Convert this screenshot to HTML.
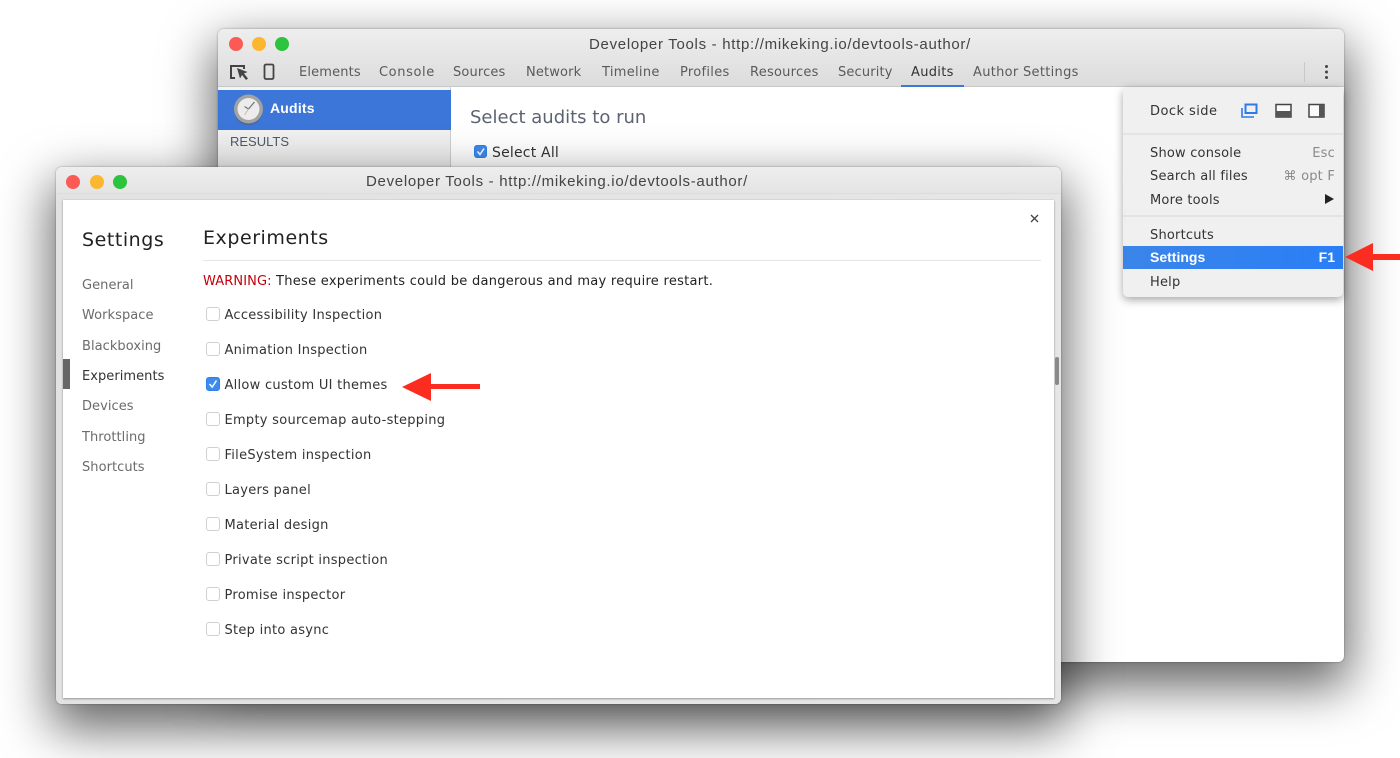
<!DOCTYPE html>
<html><head><meta charset="utf-8">
<style>
html,body{margin:0;padding:0;background:#fff;width:1400px;height:758px;overflow:hidden}
body{position:relative;font-family:"DejaVu Sans","Liberation Sans",sans-serif;font-size:13px;color:#333}
div{position:absolute;box-sizing:border-box}
.t{position:absolute;white-space:nowrap;line-height:16px;filter:blur(.3px)}
#w1{left:218px;top:29px;width:1126px;height:633px;background:#fff;border-radius:6px;box-shadow:0 20px 50px 5px rgba(0,0,0,.6),0 0 2px rgba(0,0,0,.35)}
#w1b{left:218px;top:29px;width:1126px;height:58px;background:linear-gradient(#eeeeee,#dcdcdc);border-radius:6px 6px 0 0;border-bottom:1px solid #c8c8c8}
#w2{left:56px;top:167px;width:1005px;height:537px;background:linear-gradient(90deg,#e2e2e2,#e6e6e6);border-radius:6px;box-shadow:0 20px 50px 5px rgba(0,0,0,.6),0 0 2px rgba(0,0,0,.35)}
#dlg{left:63px;top:200px;width:991px;height:498px;background:#fff;box-shadow:0 1px 2px rgba(0,0,0,.3),0 0 1px rgba(0,0,0,.2)}
.dot{width:14px;height:14px;border-radius:50%}
.tab{color:#5a5a5a;font-size:13px;top:65px;letter-spacing:.15px}
.s{color:#6b6b6b;left:82px;font-size:13px;letter-spacing:.05px}
.x{left:224.500px;color:#333;font-size:13px;letter-spacing:.27px}
.cb{left:206px;width:14px;height:14px;border:1px solid #d0d0d0;border-radius:3px;background:#fff}
.cb.on{background:#3b8bf0;border-color:#2f7fe6}
.m{color:#333;left:1150px;font-size:13px;letter-spacing:.2px}
.k{color:#8a8a8a;font-size:13px;letter-spacing:.2px}
.sep{left:1123px;width:220px;height:2px;background:#e4e4e4}
.ti{color:#444;font-family:'Liberation Sans',sans-serif;font-size:15px;letter-spacing:.7px}
</style></head><body>
<div id="w1"></div>
<div id="w1b"></div>
<div class="dot" style="left:229px;top:37px;background:#fb5a55"></div>
<div class="dot" style="left:252px;top:37px;background:#fdb62f"></div>
<div class="dot" style="left:275px;top:37px;background:#2cc33f"></div>
<span class="t ti" style="left:589px;top:37px">Developer Tools - http://mikeking.io/devtools-author/</span>
<svg style="position:absolute;left:229px;top:63px" width="20" height="18" viewBox="0 0 20 18"><path d="M6 15H2V3h13v3" fill="none" stroke="#444" stroke-width="2"/><path d="M8 5l3 10.500 2-3.500 4 5 2-1.500-4-5 3.500-1.500z" fill="#444"/></svg>
<svg style="position:absolute;left:263px;top:63px" width="12" height="17" viewBox="0 0 12 17"><rect x="1.500" y="1.500" width="9" height="14.500" rx="1.500" fill="none" stroke="#444" stroke-width="1.800"/></svg>
<span class="t tab" style="left:299px">Elements</span>
<span class="t tab" style="left:379px;letter-spacing:.6px">Console</span>
<span class="t tab" style="left:453px">Sources</span>
<span class="t tab" style="left:526px">Network</span>
<span class="t tab" style="left:602px;letter-spacing:.3px">Timeline</span>
<span class="t tab" style="left:680px;letter-spacing:.3px">Profiles</span>
<span class="t tab" style="left:750px;letter-spacing:.25px">Resources</span>
<span class="t tab" style="left:838px">Security</span>
<span class="t tab" style="left:911px;color:#333;letter-spacing:.3px">Audits</span>
<span class="t tab" style="left:973px;letter-spacing:.3px">Author Settings</span>
<div style="left:901px;top:85px;width:63px;height:2px;background:#3b78d8"></div>
<div style="left:1304px;top:62px;width:1px;height:20px;background:#c8c8c8"></div>
<div style="left:1325px;top:65px;width:3px;height:3px;border-radius:50%;background:#444;box-shadow:0 5.500px 0 #444,0 11px 0 #444"></div>
<div style="left:218px;top:87px;width:233px;height:90px;background:linear-gradient(#f4f4f4,#ececec);border-right:1px solid #cfcfcf"></div>
<div style="left:218px;top:90px;width:233px;height:40px;background:#3b76d8"></div>
<svg style="position:absolute;left:233px;top:93px" width="31" height="33" viewBox="0 0 31 33"><ellipse cx="15.500" cy="18" rx="14" ry="14" fill="#555" opacity=".5"/><circle cx="15.500" cy="16" r="14.500" fill="#a2a2a2"/><circle cx="15.500" cy="16" r="11" fill="#ececec"/><path d="M15.500 16l-4-2.500M15.500 16l6-7" stroke="#777" stroke-width="1.300" fill="none"/><path d="M15.500 16l-4 6" stroke="#e9a9a9" stroke-width="1" fill="none"/></svg>
<span class="t" style="left:270px;top:100px;color:#fff;font-weight:bold;font-size:14px;font-family:'Liberation Sans',sans-serif;letter-spacing:.2px">Audits</span>
<span class="t" style="left:230px;top:134px;color:#4d5a6b;font-size:13px;font-family:'Liberation Sans',sans-serif">RESULTS</span>
<span class="t" style="left:470px;top:109px;color:#5c6370;font-size:18px;line-height:18px">Select audits to run</span>
<div class="cb on" style="left:474px;top:145px;width:13px;height:13px"></div>
<svg style="position:absolute;left:474px;top:145px" width="13" height="13"><path d="M3.500 6.500l2.500 3 4-6" stroke="#fff" stroke-width="1.500" fill="none"/></svg>
<span class="t" style="left:492px;top:145px;font-size:14px;color:#333;letter-spacing:.2px">Select All</span>

<!-- dropdown menu -->
<div style="left:1123px;top:87px;width:220px;height:210px;background:#f0f0f0;border-radius:5px;box-shadow:0 3px 9px rgba(0,0,0,.35)"></div>
<span class="t m" style="top:104px;letter-spacing:.45px">Dock side</span>
<svg style="position:absolute;left:1241px;top:103px" width="17" height="15" viewBox="0 0 17 15"><path d="M1 5v9h12" fill="none" stroke="#2e7be8" stroke-width="1.600"/><rect x="4.500" y="1.500" width="11" height="8.500" fill="none" stroke="#2e7be8" stroke-width="2"/></svg>
<svg style="position:absolute;left:1275px;top:103px" width="17" height="15" viewBox="0 0 17 15"><rect x="1" y="1.500" width="15" height="12.500" fill="#fafafa" stroke="#444" stroke-width="1.500"/><rect x="1" y="8" width="15" height="6" fill="#555"/></svg>
<svg style="position:absolute;left:1308px;top:103px" width="17" height="15" viewBox="0 0 17 15"><rect x="1" y="1.500" width="15" height="12.500" fill="#fafafa" stroke="#444" stroke-width="1.500"/><rect x="11" y="1.500" width="5" height="12.500" fill="#555"/></svg>
<div class="sep" style="top:133px"></div>
<span class="t m" style="top:146px">Show console</span><span class="t k" style="right:65px;top:146px">Esc</span>
<span class="t m" style="top:169px">Search all files</span><span class="t k" style="right:65px;top:169px">⌘ opt F</span>
<span class="t m" style="top:193px">More tools</span>
<svg style="position:absolute;left:1325px;top:194px" width="9" height="10"><path d="M0 0l9 5-9 5z" fill="#222"/></svg>
<div class="sep" style="top:215px"></div>
<span class="t m" style="top:228px">Shortcuts</span>
<div style="left:1123px;top:246px;width:220px;height:23px;background:linear-gradient(90deg,#3b85ea,#2a7ef5)"></div>
<span class="t m" style="top:249px;color:#fff;font-weight:bold;font-family:'Liberation Sans',sans-serif;font-size:14px;letter-spacing:0">Settings</span>
<span class="t" style="right:65px;top:249px;color:#fff;font-weight:bold;font-family:'Liberation Sans',sans-serif;font-size:14px">F1</span>
<span class="t m" style="top:275px">Help</span>
<svg style="position:absolute;left:1344px;top:242px" width="56" height="30"><path d="M1 15L29 1v11h27v6H29v11z" fill="#fb2c20"/></svg>

<!-- front window -->
<div id="w2"></div>
<div style="left:56px;top:167px;width:1005px;height:27px;background:linear-gradient(#eeeeee,#e4e4e4);border-radius:6px 6px 0 0;border-bottom:1px solid #dcdcdc"></div>
<div class="dot" style="left:66px;top:175px;background:#fb5a55"></div>
<div class="dot" style="left:90px;top:175px;background:#fdb62f"></div>
<div class="dot" style="left:113px;top:175px;background:#2cc33f"></div>
<span class="t ti" style="left:366px;top:174px">Developer Tools - http://mikeking.io/devtools-author/</span>
<div id="dlg"></div>
<div style="left:1055px;top:357px;width:4px;height:28px;background:#8a8a8a;border-radius:2px"></div>
<svg style="position:absolute;left:1030px;top:214px" width="9" height="9"><path d="M1 1l7 7M8 1l-7 7" stroke="#444" stroke-width="1.300"/></svg>
<span class="t" style="left:82px;top:230px;color:#222;font-size:19px;line-height:20px;letter-spacing:.55px">Settings</span>
<span class="t" style="left:203px;top:228px;color:#222;font-size:19px;line-height:20px;letter-spacing:.55px">Experiments</span>
<div style="left:203px;top:260px;width:838px;height:1px;background:#e5e5e5"></div>
<span class="t" style="left:203px;top:274px;color:#222;font-size:13px;letter-spacing:.28px"><span style="color:#c4000a;letter-spacing:.1px">WARNING:</span> These experiments could be dangerous and may require restart.</span>
<span class="t s" style="top:278px">General</span>
<span class="t s" style="top:308px">Workspace</span>
<span class="t s" style="top:339px">Blackboxing</span>
<div style="left:63px;top:359px;width:7px;height:30px;background:#666"></div>
<span class="t s" style="top:369px;color:#333">Experiments</span>
<span class="t s" style="top:399px">Devices</span>
<span class="t s" style="top:430px">Throttling</span>
<span class="t s" style="top:460px">Shortcuts</span>

<div class="cb" style="top:307px"></div><span class="t x" style="top:308px">Accessibility Inspection</span>
<div class="cb" style="top:342px"></div><span class="t x" style="top:343px">Animation Inspection</span>
<div class="cb on" style="top:377px"></div>
<svg style="position:absolute;left:206px;top:377px" width="14" height="14"><path d="M3.500 7l2.700 3 4.300-6.500" stroke="#fff" stroke-width="1.500" fill="none"/></svg>
<span class="t x" style="top:378px">Allow custom UI themes</span>
<div class="cb" style="top:412px"></div><span class="t x" style="top:413px">Empty sourcemap auto-stepping</span>
<div class="cb" style="top:447px"></div><span class="t x" style="top:448px">FileSystem inspection</span>
<div class="cb" style="top:482px"></div><span class="t x" style="top:483px">Layers panel</span>
<div class="cb" style="top:517px"></div><span class="t x" style="top:518px">Material design</span>
<div class="cb" style="top:552px"></div><span class="t x" style="top:553px">Private script inspection</span>
<div class="cb" style="top:587px"></div><span class="t x" style="top:588px">Promise inspector</span>
<div class="cb" style="top:622px"></div><span class="t x" style="top:623px">Step into async</span>
<svg style="position:absolute;left:402px;top:373px" width="78" height="28"><path d="M0 14L29 0v11h49v5H29v12z" fill="#fb2c20"/></svg>
</body></html>
